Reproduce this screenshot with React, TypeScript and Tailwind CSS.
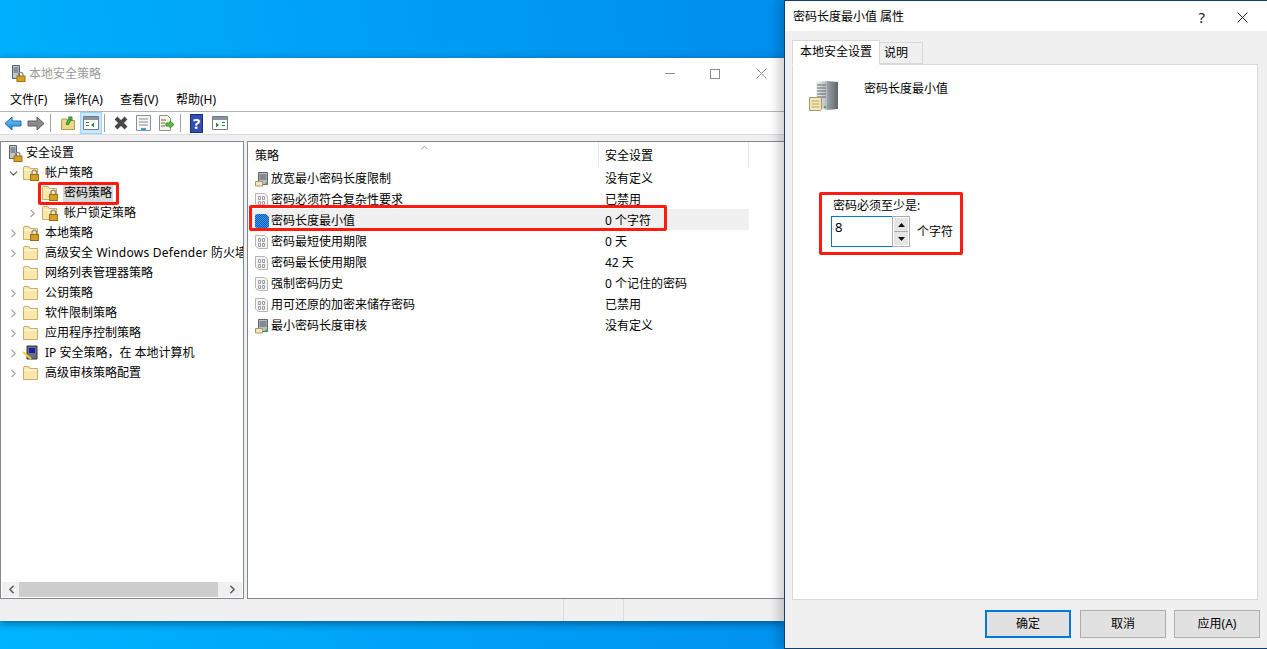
import type { ReactNode } from "react";
import { ChevronDown, ChevronRight, ChevronLeft, ChevronUp } from "lucide-react";

const FONT = "font-['Noto_Sans','Noto_Sans_CJK_SC',sans-serif]";

function ServerLock() {
  return (
    <svg width="16" height="17" viewBox="0 0 16 17" className="shrink-0">
      <path d="M2.500.5h7v13h-7z" fill="#c4c9ce" stroke="#59626b" />
      <path d="M3.500 3h5M3.500 5h5M3.500 7h5" stroke="#4f5860" />
      <path d="M8.500 11V9.500a2.200 2.200 0 0 1 4.400 0V11" fill="none" stroke="#8a8a8a" strokeWidth="1.300" />
      <rect x="7" y="11" width="8" height="5.500" fill="#d8a21f" stroke="#9a7414" />
    </svg>
  );
}

function Folder({ lock = false }: { lock?: boolean }) {
  return (
    <svg width="18" height="16" viewBox="0 0 18 16" className="shrink-0">
      <path d="M1.500 2.500V14.500H15.500V3.500H8L7 1.500H2z" fill="#f8e6ab" stroke="#c9ad68" />
      <path d="M2.500 5h12" stroke="#fff6d8" strokeWidth="1.500" />
      {lock && (
        <>
          <path d="M10 9.500V7.500a2.300 2.300 0 0 1 4.600 0v2" fill="none" stroke="#8a8a8a" strokeWidth="1.300" />
          <rect x="8.500" y="9.500" width="8" height="6" fill="#d4a024" stroke="#94700f" />
        </>
      )}
    </svg>
  );
}

function PolicyDoc({ kind }: { kind: "gray" | "blue" | "server" }) {
  if (kind === "server") {
    return (
      <svg width="16" height="16" viewBox="0 0 16 16" className="shrink-0">
        <path d="M4.500 1.500h9v12h-9z" fill="#b8bec4" stroke="#5f666c" />
        <path d="M5.500 4h7M5.500 6h7M5.500 8h7" stroke="#4f565c" />
        <rect x="11.500" y="11.500" width="2" height="2" fill="#35b34a" />
        <path d="M1.500 10.500h7v4.500h-7z" fill="#f3e7c0" stroke="#a8986b" />
      </svg>
    );
  }
  if (kind === "blue") {
    return (
      <svg width="16" height="16" viewBox="0 0 16 16" className="shrink-0">
        <defs>
          <pattern id="dots" width="2" height="2" patternUnits="userSpaceOnUse">
            <rect width="2" height="2" fill="#3f9be6" />
            <rect width="1" height="1" fill="#0b5cb8" />
            <rect x="1" y="1" width="1" height="1" fill="#0b5cb8" />
          </pattern>
        </defs>
        <path d="M1 2l2-1h9l3 3v10l-2 1H3l-2-1z" fill="url(#dots)" />
      </svg>
    );
  }
  return (
    <svg width="16" height="16" viewBox="0 0 16 16" className="shrink-0">
      <path d="M1.500 1.500h9l3 2.500v10.500h-9l-3-2.500z" fill="#f4f4f4" stroke="#b5b5b5" />
      <path d="M4.500 4.500h2v3h-2zM8.500 4.500h2v3h-2zM4.500 9.500h2v3h-2zM8.500 9.500h2v3h-2z" fill="none" stroke="#9c9c9c" />
    </svg>
  );
}

function TreeRow({ depth, arrow, icon, label, selected }: {
  depth: number;
  arrow?: "open" | "closed";
  icon: ReactNode;
  label: ReactNode;
  selected?: boolean;
}) {
  return (
    <div className="h-5 flex items-center whitespace-nowrap" style={{ paddingLeft: depth * 19 + 3 }}>
      <span className="w-[18px] flex justify-center shrink-0">
        {arrow === "open" && <ChevronDown size={13} className="text-[#555]" />}
        {arrow === "closed" && <ChevronRight size={13} className="text-[#a0a0a0]" />}
      </span>
      {icon}
      <span className={`ml-[4px] px-[1px] leading-[18px] ${selected ? "bg-[#d9d9d9]" : ""}`}>{label}</span>
    </div>
  );
}

const tree = [
  { arrow: "closed" as const, lock: true, label: "本地策略" },
  {
    arrow: "closed" as const,
    label: (
      <>
        高级安全<span className="tracking-[0.25px]"> Windows Defender </span>防火墙
      </>
    ),
  },
  { label: "网络列表管理器策略" },
  { arrow: "closed" as const, label: "公钥策略" },
  { arrow: "closed" as const, label: "软件限制策略" },
  { arrow: "closed" as const, label: "应用程序控制策略" },
];

const rows = [
  { kind: "server" as const, name: "放宽最小密码长度限制", value: "没有定义" },
  { kind: "gray" as const, name: "密码必须符合复杂性要求", value: "已禁用" },
  { kind: "blue" as const, name: "密码长度最小值", value: "0 个字符" },
  { kind: "gray" as const, name: "密码最短使用期限", value: "0 天" },
  { kind: "gray" as const, name: "密码最长使用期限", value: "42 天" },
  { kind: "gray" as const, name: "强制密码历史", value: "0 个记住的密码" },
  { kind: "gray" as const, name: "用可还原的加密来储存密码", value: "已禁用" },
  { kind: "server" as const, name: "最小密码长度审核", value: "没有定义" },
];

function MainWindow() {
  return (
    <div className="absolute left-0 top-[58px] w-[784px] h-[563px] bg-[#f0f0f0] flex flex-col shadow-[0_2px_8px_rgba(0,0,0,0.45)]">
      {/* title bar */}
      <div className="h-[31px] bg-white flex items-center pl-[10px] shrink-0">
        <ServerLock />
        <span className="ml-[3px] text-[#9a9a9a]">本地安全策略</span>
        <div className="ml-auto flex items-center">
          <span className="w-[10px] h-px bg-[#8c8c8c] mr-[35px]" />
          <span className="w-[10px] h-[10px] border border-[#8c8c8c] mr-[36px]" />
          <svg width="11" height="11" viewBox="0 0 11 11" className="mr-[17px]">
            <path d="M.5.5l10 10M10.500.5l-10 10" stroke="#8c8c8c" fill="none" />
          </svg>
        </div>
      </div>
      {/* menu */}
      <div className="h-[23px] bg-white border-b border-[#b4b4b4] flex items-center pl-[10px] shrink-0">
        <span className="w-[54px]">文件(F)</span>
        <span className="w-[56px]">操作(A)</span>
        <span className="w-[56px]">查看(V)</span>
        <span>帮助(H)</span>
      </div>
      {/* toolbar */}
      <div className="h-[23px] bg-white border-b border-[#dcdcdc] flex items-center pl-[4px] shrink-0">
        <svg width="18" height="15" viewBox="0 0 18 15">
          <defs>
            <linearGradient id="back" x1="0" y1="0" x2="0" y2="1">
              <stop offset="0" stopColor="#7cc8f5" />
              <stop offset="1" stopColor="#1f86d8" />
            </linearGradient>
          </defs>
          <path d="M1 7.500l7-6.500v4h9v5H8v4z" fill="url(#back)" stroke="#1a6cb8" />
        </svg>
        <svg width="18" height="15" viewBox="0 0 18 15" className="ml-[5px]">
          <path d="M17 7.500L10 1v4H1v5h9v4z" fill="#8c8c8c" stroke="#5c5c5c" />
        </svg>
        <span className="w-px h-[18px] bg-[#a0a0a0] ml-[5px]" />
        <svg width="16" height="16" viewBox="0 0 16 16" className="ml-[9px]">
          <path d="M1.500 5.500v9h13v-9H8L7 4H2z" fill="#f0d68a" stroke="#b39a4f" />
          <path d="M6 9l3-6 2 2-3 5zM8 2h4v4" fill="#4fb548" stroke="#2e8a34" />
        </svg>
        <span className="ml-[4px] w-[22px] h-[22px] bg-[#cce8ff] border border-[#99d1ff] flex items-center justify-center">
          <svg width="16" height="14" viewBox="0 0 16 14">
            <path d="M.5.5h15v13H.5z" fill="#fff" stroke="#6f7a85" />
            <path d="M1 1h14v3H1z" fill="#8a949e" />
            <path d="M3 6h3v1H3zM3 9h3v1H3zM11 6.500v5l-3-2.500z" fill="#2e8a34" />
          </svg>
        </span>
        <span className="w-px h-[18px] bg-[#a0a0a0] ml-[2px]" />
        <svg width="16" height="16" viewBox="0 0 16 16" className="ml-[8px]">
          <path d="M3 3l10 10M13 3L3 13" stroke="#484848" strokeWidth="4" />
        </svg>
        <svg width="15" height="16" viewBox="0 0 15 16" className="ml-[7px]">
          <path d="M.5.5h14v15H.5z" fill="#f6f6f6" stroke="#8b9095" />
          <path d="M3 4h9M3 7h9M3 10h9" stroke="#8b9095" />
          <path d="M5 14h5" stroke="#31a3e0" strokeWidth="2" />
        </svg>
        <svg width="17" height="16" viewBox="0 0 17 16" className="ml-[7px]">
          <path d="M1.500.5h8l3 3v12h-11z" fill="#f8f5e4" stroke="#8b9095" />
          <path d="M3 5h5M3 8h4M3 11h4" stroke="#666" />
          <path d="M8 8h4V6l4 3.500-4 3.500v-2H8z" fill="#5abf3f" stroke="#3a8f2a" />
        </svg>
        <span className="w-px h-[18px] bg-[#a0a0a0] ml-[5px]" />
        <span className="ml-[9px] w-[13px] h-[19px] bg-[#2f4fb5] border border-[#1b2f7c] text-white text-[15px] leading-[17px] font-bold text-center">?</span>
        <svg width="16" height="14" viewBox="0 0 16 14" className="ml-[9px]">
          <path d="M.5.5h15v13H.5z" fill="#fff" stroke="#6f7a85" />
          <path d="M1 1h14v3H1z" fill="#8a949e" />
          <path d="M10 6h3v1h-3zM10 9h3v1h-3zM4 6.500v5l3-2.500z" fill="#2e8a34" />
        </svg>
      </div>
      {/* panes */}
      <div className="mt-[6px] h-[458px] flex shrink-0">
        <div className="relative w-[244px] border border-[#828790] bg-white overflow-hidden shrink-0 pt-[1px]">
          <div className="h-5 flex items-center pl-[6px]">
            <ServerLock />
            <span className="ml-[3px]">安全设置</span>
          </div>
          <TreeRow depth={0} arrow="open" icon={<Folder lock />} label="帐户策略" />
          <TreeRow depth={1} icon={<Folder lock />} label="密码策略" selected />
          <TreeRow depth={1} arrow="closed" icon={<Folder lock />} label="帐户锁定策略" />
          {tree.map((t, i) => (
            <TreeRow key={i} depth={0} arrow={t.arrow} icon={<Folder lock={t.lock} />} label={t.label} />
          ))}
          <TreeRow
            depth={0}
            arrow="closed"
            icon={
              <svg width="18" height="16" viewBox="0 0 18 16" className="shrink-0">
                <path d="M5 1h10v13H5z" fill="#6d7278" stroke="#2f3338" />
                <path d="M7 3h6v5H7z" fill="#1a1fb0" />
                <path d="M1 7l8 7" stroke="#e8d23a" strokeWidth="2" />
              </svg>
            }
            label="IP 安全策略，在 本地计算机"
          />
          <TreeRow depth={0} arrow="closed" icon={<Folder />} label="高级审核策略配置" />
          {/* tree h-scrollbar */}
          <div className="absolute left-[1px] right-[1px] bottom-[1px] h-[15px] bg-[#f0f0f0] flex items-center">
            <ChevronLeft size={13} strokeWidth={3} className="text-[#606060] ml-[3px]" />
            <div className="ml-[1px] w-[199px] h-full bg-[#cdcdcd]" />
            <ChevronRight size={13} strokeWidth={3} className="text-[#606060] ml-auto mr-[3px]" />
          </div>
        </div>
        <div className="ml-[3px] flex-1 border border-[#828790] border-r-0 bg-white">
          <div className="relative h-[25px] flex items-center">
            <span className="w-[351px] pl-[7px] pt-[2px] h-full flex items-center border-r border-[#e5e5e5]">策略</span>
            <span className="w-[150px] pl-[6px] pt-[2px] h-full flex items-center border-r border-[#e5e5e5]">安全设置</span>
            <ChevronUp size={11} className="absolute left-[171px] top-0 text-[#8c8c8c]" />
          </div>
          {rows.map((r) => (
            <div key={r.name} className={`ml-[2px] w-[499px] h-[21px] pt-[2px] flex items-center ${r.kind === "blue" ? "bg-[#f0f0f0]" : ""}`}>
              <span className="w-[350px] pl-[4px] flex items-center gap-[1px]">
                <PolicyDoc kind={r.kind} />
                {r.name}
              </span>
              <span className="pl-[5px]">{r.value}</span>
            </div>
          ))}
        </div>
      </div>
      {/* status bar */}
      <div className="flex-1 flex justify-end">
        <span className="w-[60px] border-l border-[#dcdcdc]" />
        <span className="w-[161px] border-l border-[#dcdcdc]" />
      </div>
    </div>
  );
}

function Dialog() {
  return (
    <div className="absolute left-[784px] top-0 w-[483px] h-[649px] bg-[#f0f0f0] border-t border-b border-l border-[#123f6b] flex flex-col shadow-[-6px_0_10px_rgba(0,0,0,0.18)]">
      <div className="h-[30px] bg-white flex items-center pl-2 pt-[2px] shrink-0">
        <span>密码长度最小值 属性</span>
        <span className="ml-auto mr-[32px] text-[15px] text-[#222]">?</span>
        <svg width="11" height="11" viewBox="0 0 11 11" className="mr-[19px]">
          <path d="M.5.5l10 10M10.500.5l-10 10" stroke="#222" fill="none" />
        </svg>
      </div>
      <div className="h-[33px] flex items-end pl-[7px] shrink-0">
        <span className="relative z-10 h-[25px] -mb-px px-[7px] pb-[2px] bg-white border border-[#d9d9d9] border-b-white flex items-center">本地安全设置</span>
        <span className="h-[22px] pl-[4px] pr-[14px] bg-[#f0f0f0] border border-l-0 border-[#d9d9d9] flex items-center">说明</span>
      </div>
      <div className="ml-[7px] w-[466px] h-[536px] bg-white border border-[#d9d9d9] shrink-0 relative">
        <div className="flex items-start pl-[15px] pt-[15px]">
          <svg width="30" height="32" viewBox="0 0 30 32">
            <defs>
              <linearGradient id="side" x1="0" y1="0" x2="1" y2="0">
                <stop offset="0" stopColor="#9aa0a6" />
                <stop offset="1" stopColor="#5f656b" />
              </linearGradient>
              <linearGradient id="front" x1="0" y1="0" x2="1" y2="0">
                <stop offset="0" stopColor="#eef0f2" />
                <stop offset="1" stopColor="#b4b9be" />
              </linearGradient>
            </defs>
            <path d="M8 2l11-1v29l-11-3z" fill="url(#front)" />
            <path d="M19 1l11 1v27l-11 1z" fill="url(#side)" />
            <path d="M9 5h9M9 8h9M9 11h9M9 14h9M9 17h9" stroke="#5f666c" />
            <rect x="16" y="26" width="2" height="2" fill="#35b34a" />
            <path d="M1.500 17.500h12v11a2 2 0 0 1-2 2h-10z" fill="#f3e7b8" stroke="#a8986b" />
            <path d="M3.500 21h8M3.500 24h8M3.500 27h8" stroke="#b9a66d" />
          </svg>
          <span className="ml-[26px]">密码长度最小值</span>
        </div>
        <div className="absolute left-[38px] top-[132px]">
          <div className="ml-[2px]">密码必须至少是:</div>
          <div className="flex items-center mt-[1px]">
            <div className="w-[61px] h-[31px] border border-[#0078d7] border-r-0 pl-[3px] pt-[2px] bg-white text-[13px] leading-[17px]">8</div>
            <div className="w-[18px] h-[31px] border border-[#adadad] p-px flex flex-col bg-white">
              <span className="h-[14px] bg-[#e5e5e5] border-b border-[#adadad] flex items-center justify-center">
                <svg width="7" height="4" viewBox="0 0 7 4"><path d="M3.500 0L7 4H0z" fill="#111" /></svg>
              </span>
              <span className="flex-1 bg-[#e5e5e5] flex items-center justify-center">
                <svg width="7" height="4" viewBox="0 0 7 4"><path d="M3.500 4L7 0H0z" fill="#111" /></svg>
              </span>
            </div>
            <span className="ml-[7px]">个字符</span>
          </div>
        </div>
      </div>
      <div className="flex-1 flex justify-end items-start pt-[10px] pr-[7px]">
        <button className="w-[86px] h-[28px] bg-[#e1e1e1] border-2 border-[#0078d7]">确定</button>
        <button className="ml-[9px] w-[86px] h-[28px] bg-[#e1e1e1] border border-[#adadad]">取消</button>
        <button className="ml-[8px] w-[86px] h-[28px] bg-[#e1e1e1] border border-[#adadad]">应用(A)</button>
      </div>
    </div>
  );
}

export default function App() {
  return (
    <div className={`relative w-[1267px] h-[649px] overflow-hidden text-[12px] text-black ${FONT} bg-[linear-gradient(80deg,#00b4ff_0%,#008fee_62%)]`}>
      <MainWindow />
      <Dialog />
      {/* red annotation boxes */}
      <div className="absolute left-[38px] top-[182px] w-[81px] h-[23px] border-[3px] border-[#ff1a0f] rounded-[2px]" />
      <div className="absolute left-[249px] top-[205px] w-[418px] h-[26px] border-[3px] border-[#ff1a0f] rounded-[2px]" />
      <div className="absolute left-[819px] top-[192px] w-[144px] h-[63px] border-[3px] border-[#ff1a0f] rounded-[2px]" />
    </div>
  );
}
